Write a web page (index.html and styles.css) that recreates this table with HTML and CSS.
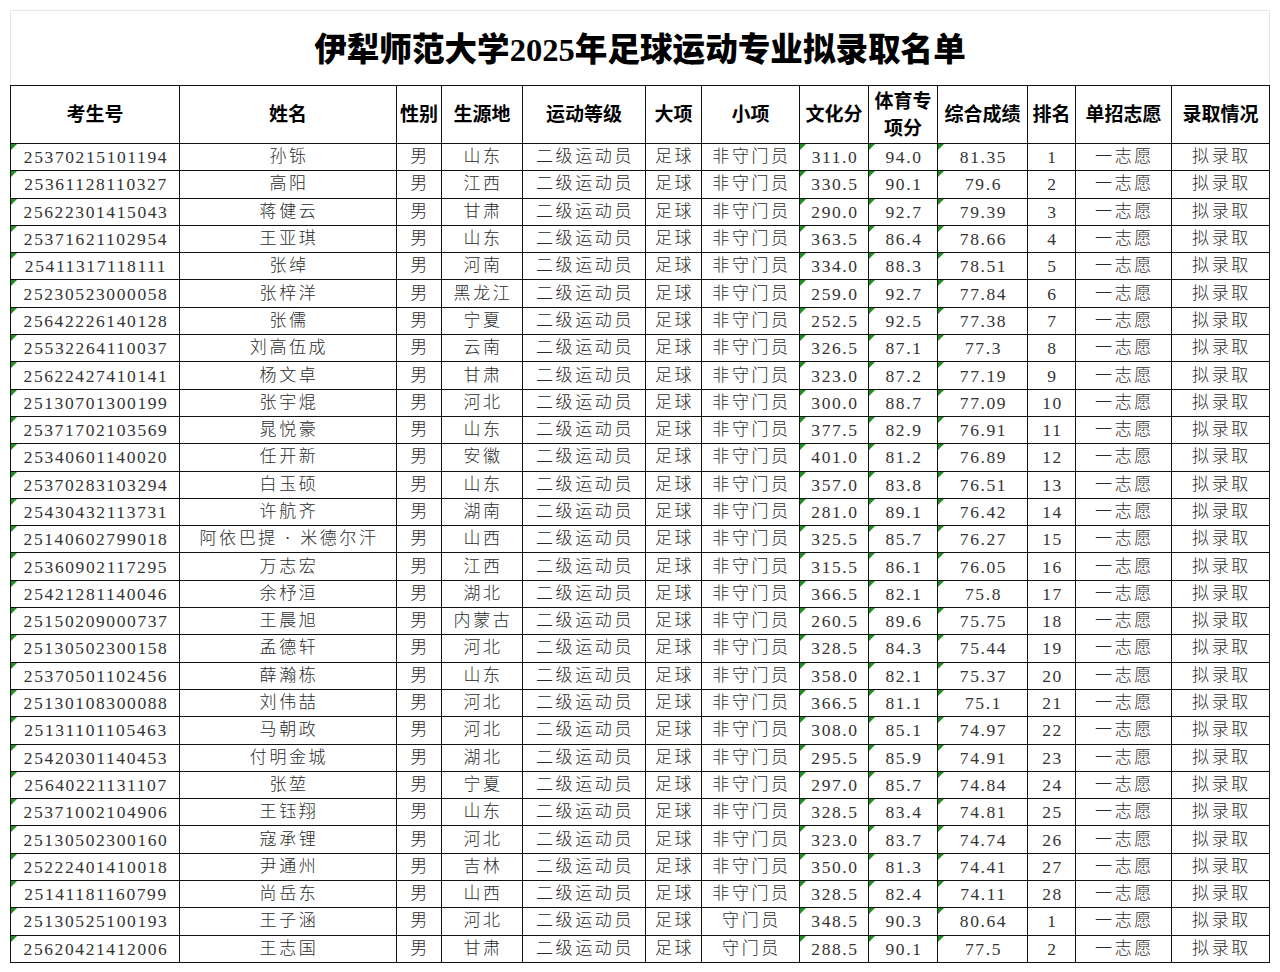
FILE: index.html
```html
<!DOCTYPE html>
<html lang="zh">
<head>
<meta charset="utf-8">
<title>伊犁师范大学2025年足球运动专业拟录取名单</title>
<link rel="stylesheet" href="styles.css">
</head>
<body>
<div class="sheet">
  <div class="title">伊犁师范大学2025年足球运动专业拟录取名单</div>
  <table class="list">
    <colgroup>
      <col class="c1"><col class="c2"><col class="c3"><col class="c4"><col class="c5"><col class="c6"><col class="c7"><col class="c8"><col class="c9"><col class="c10"><col class="c11"><col class="c12"><col class="c13">
    </colgroup>
    <thead>
      <tr><th>考生号</th><th>姓名</th><th>性别</th><th>生源地</th><th>运动等级</th><th>大项</th><th>小项</th><th>文化分</th><th>体育专项分</th><th>综合成绩</th><th>排名</th><th>单招志愿</th><th>录取情况</th></tr>
    </thead>
    <tbody>
      <tr><td class="g num">25370215101194</td><td>孙铄</td><td>男</td><td>山东</td><td>二级运动员</td><td>足球</td><td>非守门员</td><td class="g num">311.0</td><td class="g num">94.0</td><td class="g num">81.35</td><td class="num">1</td><td>一志愿</td><td>拟录取</td></tr>
      <tr><td class="g num">25361128110327</td><td>高阳</td><td>男</td><td>江西</td><td>二级运动员</td><td>足球</td><td>非守门员</td><td class="g num">330.5</td><td class="g num">90.1</td><td class="g num">79.6</td><td class="num">2</td><td>一志愿</td><td>拟录取</td></tr>
      <tr><td class="g num">25622301415043</td><td>蒋健云</td><td>男</td><td>甘肃</td><td>二级运动员</td><td>足球</td><td>非守门员</td><td class="g num">290.0</td><td class="g num">92.7</td><td class="g num">79.39</td><td class="num">3</td><td>一志愿</td><td>拟录取</td></tr>
      <tr><td class="g num">25371621102954</td><td>王亚琪</td><td>男</td><td>山东</td><td>二级运动员</td><td>足球</td><td>非守门员</td><td class="g num">363.5</td><td class="g num">86.4</td><td class="g num">78.66</td><td class="num">4</td><td>一志愿</td><td>拟录取</td></tr>
      <tr><td class="g num">25411317118111</td><td>张绰</td><td>男</td><td>河南</td><td>二级运动员</td><td>足球</td><td>非守门员</td><td class="g num">334.0</td><td class="g num">88.3</td><td class="g num">78.51</td><td class="num">5</td><td>一志愿</td><td>拟录取</td></tr>
      <tr><td class="g num">25230523000058</td><td>张梓洋</td><td>男</td><td>黑龙江</td><td>二级运动员</td><td>足球</td><td>非守门员</td><td class="g num">259.0</td><td class="g num">92.7</td><td class="g num">77.84</td><td class="num">6</td><td>一志愿</td><td>拟录取</td></tr>
      <tr><td class="g num">25642226140128</td><td>张儒</td><td>男</td><td>宁夏</td><td>二级运动员</td><td>足球</td><td>非守门员</td><td class="g num">252.5</td><td class="g num">92.5</td><td class="g num">77.38</td><td class="num">7</td><td>一志愿</td><td>拟录取</td></tr>
      <tr><td class="g num">25532264110037</td><td>刘高伍成</td><td>男</td><td>云南</td><td>二级运动员</td><td>足球</td><td>非守门员</td><td class="g num">326.5</td><td class="g num">87.1</td><td class="g num">77.3</td><td class="num">8</td><td>一志愿</td><td>拟录取</td></tr>
      <tr><td class="g num">25622427410141</td><td>杨文卓</td><td>男</td><td>甘肃</td><td>二级运动员</td><td>足球</td><td>非守门员</td><td class="g num">323.0</td><td class="g num">87.2</td><td class="g num">77.19</td><td class="num">9</td><td>一志愿</td><td>拟录取</td></tr>
      <tr><td class="g num">25130701300199</td><td>张宇焜</td><td>男</td><td>河北</td><td>二级运动员</td><td>足球</td><td>非守门员</td><td class="g num">300.0</td><td class="g num">88.7</td><td class="g num">77.09</td><td class="num">10</td><td>一志愿</td><td>拟录取</td></tr>
      <tr><td class="g num">25371702103569</td><td>晁悦豪</td><td>男</td><td>山东</td><td>二级运动员</td><td>足球</td><td>非守门员</td><td class="g num">377.5</td><td class="g num">82.9</td><td class="g num">76.91</td><td class="num">11</td><td>一志愿</td><td>拟录取</td></tr>
      <tr><td class="g num">25340601140020</td><td>任开新</td><td>男</td><td>安徽</td><td>二级运动员</td><td>足球</td><td>非守门员</td><td class="g num">401.0</td><td class="g num">81.2</td><td class="g num">76.89</td><td class="num">12</td><td>一志愿</td><td>拟录取</td></tr>
      <tr><td class="g num">25370283103294</td><td>白玉硕</td><td>男</td><td>山东</td><td>二级运动员</td><td>足球</td><td>非守门员</td><td class="g num">357.0</td><td class="g num">83.8</td><td class="g num">76.51</td><td class="num">13</td><td>一志愿</td><td>拟录取</td></tr>
      <tr><td class="g num">25430432113731</td><td>许航齐</td><td>男</td><td>湖南</td><td>二级运动员</td><td>足球</td><td>非守门员</td><td class="g num">281.0</td><td class="g num">89.1</td><td class="g num">76.42</td><td class="num">14</td><td>一志愿</td><td>拟录取</td></tr>
      <tr><td class="g num">25140602799018</td><td>阿依巴提<span class="dot">·</span>米德尔汗</td><td>男</td><td>山西</td><td>二级运动员</td><td>足球</td><td>非守门员</td><td class="g num">325.5</td><td class="g num">85.7</td><td class="g num">76.27</td><td class="num">15</td><td>一志愿</td><td>拟录取</td></tr>
      <tr><td class="g num">25360902117295</td><td>万志宏</td><td>男</td><td>江西</td><td>二级运动员</td><td>足球</td><td>非守门员</td><td class="g num">315.5</td><td class="g num">86.1</td><td class="g num">76.05</td><td class="num">16</td><td>一志愿</td><td>拟录取</td></tr>
      <tr><td class="g num">25421281140046</td><td>余杼洹</td><td>男</td><td>湖北</td><td>二级运动员</td><td>足球</td><td>非守门员</td><td class="g num">366.5</td><td class="g num">82.1</td><td class="g num">75.8</td><td class="num">17</td><td>一志愿</td><td>拟录取</td></tr>
      <tr><td class="g num">25150209000737</td><td>王晨旭</td><td>男</td><td>内蒙古</td><td>二级运动员</td><td>足球</td><td>非守门员</td><td class="g num">260.5</td><td class="g num">89.6</td><td class="g num">75.75</td><td class="num">18</td><td>一志愿</td><td>拟录取</td></tr>
      <tr><td class="g num">25130502300158</td><td>孟德轩</td><td>男</td><td>河北</td><td>二级运动员</td><td>足球</td><td>非守门员</td><td class="g num">328.5</td><td class="g num">84.3</td><td class="g num">75.44</td><td class="num">19</td><td>一志愿</td><td>拟录取</td></tr>
      <tr><td class="g num">25370501102456</td><td>薛瀚栋</td><td>男</td><td>山东</td><td>二级运动员</td><td>足球</td><td>非守门员</td><td class="g num">358.0</td><td class="g num">82.1</td><td class="g num">75.37</td><td class="num">20</td><td>一志愿</td><td>拟录取</td></tr>
      <tr><td class="g num">25130108300088</td><td>刘伟喆</td><td>男</td><td>河北</td><td>二级运动员</td><td>足球</td><td>非守门员</td><td class="g num">366.5</td><td class="g num">81.1</td><td class="g num">75.1</td><td class="num">21</td><td>一志愿</td><td>拟录取</td></tr>
      <tr><td class="g num">25131101105463</td><td>马朝政</td><td>男</td><td>河北</td><td>二级运动员</td><td>足球</td><td>非守门员</td><td class="g num">308.0</td><td class="g num">85.1</td><td class="g num">74.97</td><td class="num">22</td><td>一志愿</td><td>拟录取</td></tr>
      <tr><td class="g num">25420301140453</td><td>付明金城</td><td>男</td><td>湖北</td><td>二级运动员</td><td>足球</td><td>非守门员</td><td class="g num">295.5</td><td class="g num">85.9</td><td class="g num">74.91</td><td class="num">23</td><td>一志愿</td><td>拟录取</td></tr>
      <tr><td class="g num">25640221131107</td><td>张堃</td><td>男</td><td>宁夏</td><td>二级运动员</td><td>足球</td><td>非守门员</td><td class="g num">297.0</td><td class="g num">85.7</td><td class="g num">74.84</td><td class="num">24</td><td>一志愿</td><td>拟录取</td></tr>
      <tr><td class="g num">25371002104906</td><td>王钰翔</td><td>男</td><td>山东</td><td>二级运动员</td><td>足球</td><td>非守门员</td><td class="g num">328.5</td><td class="g num">83.4</td><td class="g num">74.81</td><td class="num">25</td><td>一志愿</td><td>拟录取</td></tr>
      <tr><td class="g num">25130502300160</td><td>寇承锂</td><td>男</td><td>河北</td><td>二级运动员</td><td>足球</td><td>非守门员</td><td class="g num">323.0</td><td class="g num">83.7</td><td class="g num">74.74</td><td class="num">26</td><td>一志愿</td><td>拟录取</td></tr>
      <tr><td class="g num">25222401410018</td><td>尹通州</td><td>男</td><td>吉林</td><td>二级运动员</td><td>足球</td><td>非守门员</td><td class="g num">350.0</td><td class="g num">81.3</td><td class="g num">74.41</td><td class="num">27</td><td>一志愿</td><td>拟录取</td></tr>
      <tr><td class="g num">25141181160799</td><td>尚岳东</td><td>男</td><td>山西</td><td>二级运动员</td><td>足球</td><td>非守门员</td><td class="g num">328.5</td><td class="g num">82.4</td><td class="g num">74.11</td><td class="num">28</td><td>一志愿</td><td>拟录取</td></tr>
      <tr><td class="g num">25130525100193</td><td>王子涵</td><td>男</td><td>河北</td><td>二级运动员</td><td>足球</td><td>守门员</td><td class="g num">348.5</td><td class="g num">90.3</td><td class="g num">80.64</td><td class="num">1</td><td>一志愿</td><td>拟录取</td></tr>
      <tr><td class="g num">25620421412006</td><td>王志国</td><td>男</td><td>甘肃</td><td>二级运动员</td><td>足球</td><td>守门员</td><td class="g num">288.5</td><td class="g num">90.1</td><td class="g num">77.5</td><td class="num">2</td><td>一志愿</td><td>拟录取</td></tr>
    </tbody>
  </table>
</div>
</body>
</html>
```
FILE: styles.css
```css
html, body {
  margin: 0;
  padding: 0;
  background: #ffffff;
}

.sheet {
  padding: 10px;
  width: 1260px;
}

.title {
  box-sizing: border-box;
  width: 1260px;
  height: 75px;
  border: 1px solid #e6e6e6;
  border-bottom: none;
  display: flex;
  align-items: center;
  justify-content: center;
  font-family: "Liberation Serif", "Noto Sans CJK SC", serif;
  font-weight: 900;
  font-size: 32.6px;
  color: #000;
  padding-bottom: 3px;
}

.list {
  width: 1259px;
  table-layout: fixed;
  border-collapse: collapse;
  font-family: "Liberation Serif", "Noto Sans CJK SC", serif;
  color: #2b2b2b;
}

.c1 { width: 169px; }
.c2 { width: 217px; }
.c3 { width: 45px; }
.c4 { width: 81px; }
.c5 { width: 123px; }
.c6 { width: 56px; }
.c7 { width: 98px; }
.c8 { width: 69px; }
.c9 { width: 69px; }
.c10 { width: 90px; }
.c11 { width: 48px; }
.c12 { width: 96px; }
.c13 { width: 98px; }

.list th,
.list td {
  border: 1px solid #111;
  padding: 0;
  text-align: center;
  vertical-align: middle;
}

.list th {
  height: 57px;
  font-size: 19px;
  font-weight: 700;
  color: #000;
  line-height: 27px;
}

.list td {
  position: relative;
  height: 26.3px;
  font-size: 17px;
  font-weight: 300;
  letter-spacing: 2.6px;
  line-height: 20px;
  white-space: nowrap;
  padding-left: 2px;
}

.list td.num {
  font-size: 17.5px;
  font-weight: 400;
  letter-spacing: 1.6px;
  color: #333;
}

.list td .dot {
  padding: 0 7px;
}

.list td.g::before {
  content: "";
  position: absolute;
  left: 0;
  top: 0;
  width: 0;
  height: 0;
  border-top: 6px solid #1f8f1f;
  border-right: 6px solid transparent;
}
```
